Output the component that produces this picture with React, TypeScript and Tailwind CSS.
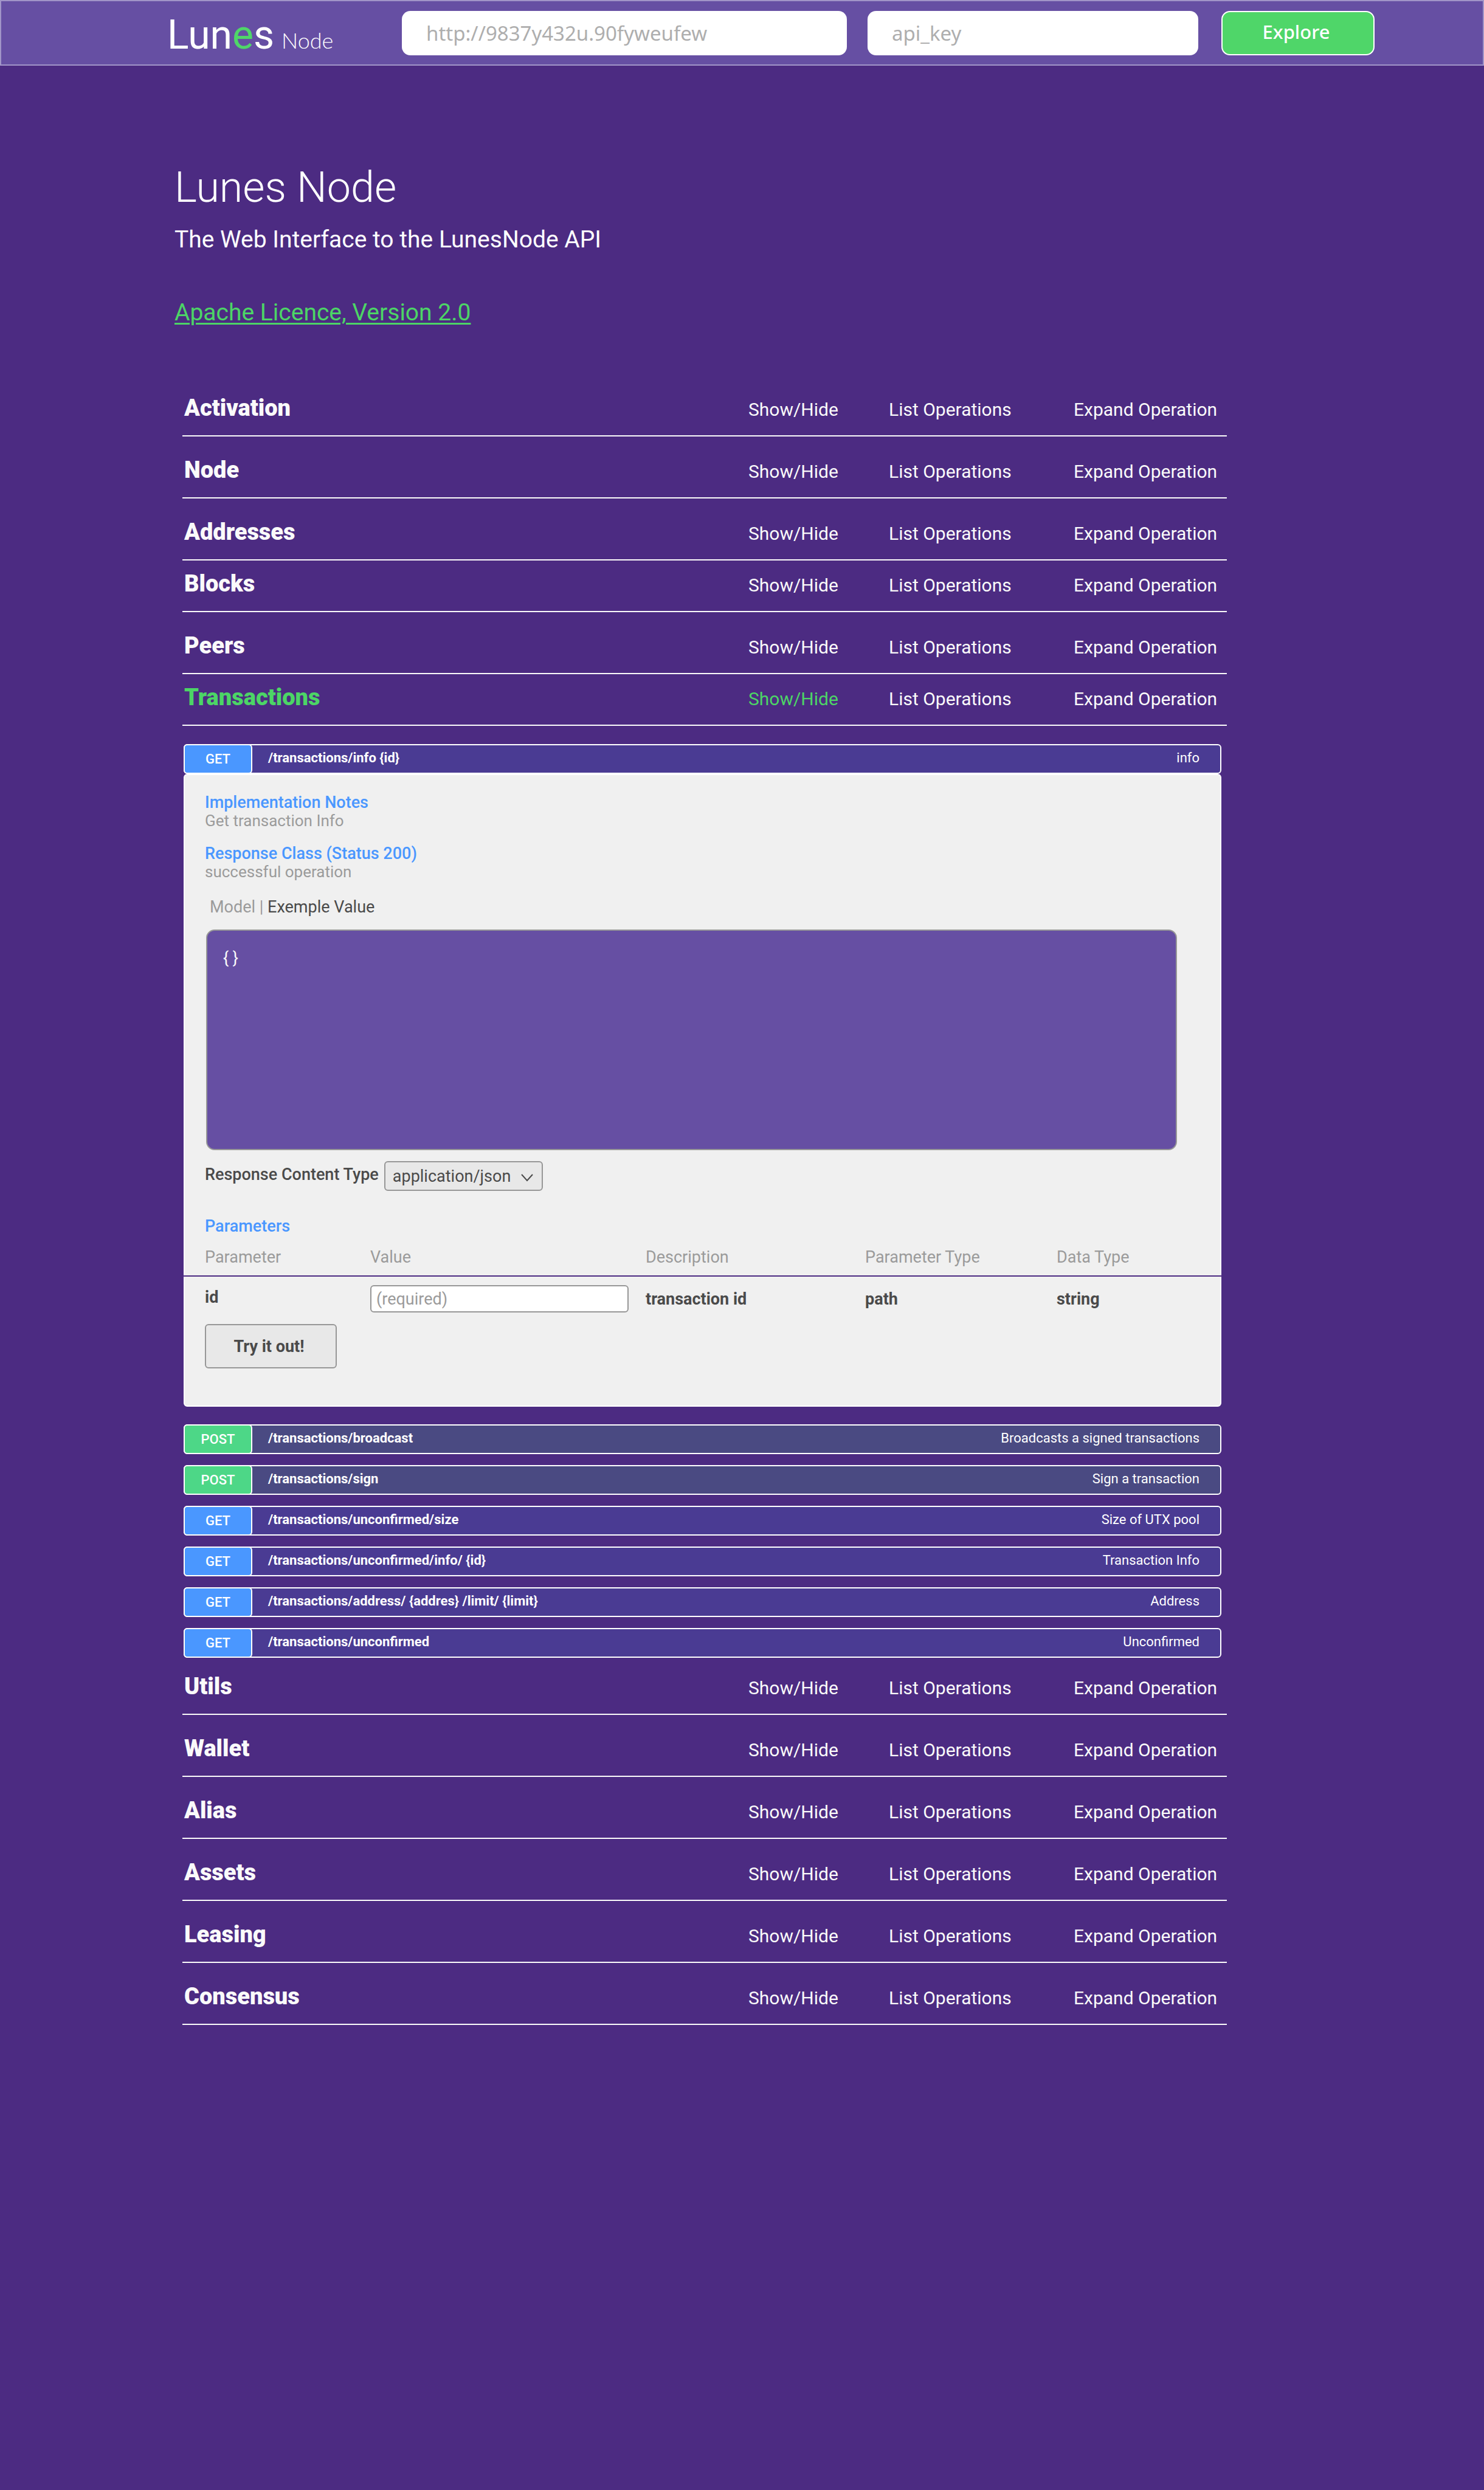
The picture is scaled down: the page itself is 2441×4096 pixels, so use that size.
import React from "react";

type Method = "GET" | "POST";

type Endpoint = { method: Method; path: string; summary: string };

const sectionsBefore = [
  { name: "Activation", compact: false },
  { name: "Node", compact: false },
  { name: "Addresses", compact: false },
  { name: "Blocks", compact: true },
  { name: "Peers", compact: false },
  { name: "Transactions", compact: true, active: true },
];

const sectionsAfter = [
  { name: "Utils", compact: true },
  { name: "Wallet", compact: false },
  { name: "Alias", compact: false },
  { name: "Assets", compact: false },
  { name: "Leasing", compact: false },
  { name: "Consensus", compact: false },
];

const endpoints: Endpoint[] = [
  { method: "POST", path: "/transactions/broadcast", summary: "Broadcasts a signed transactions" },
  { method: "POST", path: "/transactions/sign", summary: "Sign a transaction" },
  { method: "GET", path: "/transactions/unconfirmed/size", summary: "Size of UTX pool" },
  { method: "GET", path: "/transactions/unconfirmed/info/ {id}", summary: "Transaction Info" },
  { method: "GET", path: "/transactions/address/ {addres} /limit/ {limit}", summary: "Address" },
  { method: "GET", path: "/transactions/unconfirmed", summary: "Unconfirmed" },
];

function Header() {
  return (
    <header className="flex h-[108px] items-center border-2 border-[#a195c8] bg-[#664fa3] pr-[178px] pl-[273px] font-['Noto_Sans',sans-serif]">
      <div className="flex w-[386px] shrink-0 items-baseline gap-3 pt-2 text-white">
        <span className="font-['Roboto',sans-serif] text-[66px] leading-[72px]">
          Lun<span className="text-[#4fd669]">e</span>s
        </span>
        <span className="font-['Lato',sans-serif] text-[36px] font-light">Node</span>
      </div>
      <input
        type="text"
        aria-label="API address"
        placeholder="http://9837y432u.90fyweufew"
        className="h-[73px] min-w-0 flex-[652] rounded-[14px] bg-white px-[40px] text-[33px] text-[#4a4a4a] placeholder:text-[#aeaeae]"
      />
      <input
        type="text"
        aria-label="API key"
        placeholder="api_key"
        className="ml-[34px] h-[73px] min-w-0 flex-[464] rounded-[14px] bg-white px-[40px] text-[33px] text-[#4a4a4a] placeholder:text-[#aeaeae]"
      />
      <button
        type="button"
        className="ml-[38px] h-[73px] w-[252px] shrink-0 rounded-[14px] border-2 border-white bg-[#4fd669] pr-1.5 pb-1 text-[31px] font-medium text-white"
      >
        Explore
      </button>
    </header>
  );
}

function Section({ name, compact, active }: { name: string; compact: boolean; active?: boolean }) {
  return (
    <div
      className={`flex items-baseline border-b-2 border-[#fafafa] pr-[10px] pb-[18px] pl-[3px] text-[30px] leading-[48px] text-[#fafafa] ${compact ? "pt-[14px]" : "pt-[31px]"}`}
    >
      <h2 className={`flex-1 text-[38px] font-black ${active ? "text-[#4cd566]" : ""}`}>{name}</h2>
      <button type="button" className={`w-[231px] text-left ${active ? "text-[#4cd566]" : ""}`}>
        Show/Hide
      </button>
      <button type="button" className="w-[304px] text-left">
        List Operations
      </button>
      <button type="button" className="w-[242px] text-left whitespace-nowrap">
        Expand Operation
      </button>
    </div>
  );
}

function EndpointRow({ method, path, summary }: Endpoint) {
  const post = method === "POST";
  return (
    <div
      className={`flex h-[49px] items-center rounded-md border-2 border-white text-[22px] leading-[26px] text-white ${post ? "bg-[#4a4a82]" : "bg-[#4a3b93]"}`}
    >
      <span
        className={`-my-0.5 -ml-0.5 flex h-[49px] w-[113px] items-center justify-center rounded-md border-2 border-white font-medium ${post ? "bg-[#4dd787]" : "bg-[#4a97ff]"}`}
      >
        {method}
      </span>
      <a href="#" className="ml-[26px] flex-1 pb-1 font-bold">
        {path}
      </a>
      <span className="mr-[34px] pb-1">{summary}</span>
    </div>
  );
}

function HeadCell({ width, children }: { width: string; children: React.ReactNode }) {
  return (
    <th className={`border-b-2 border-[#4c2b82] pt-[21px] pb-[15px] font-normal first:pl-[35px] ${width}`}>
      {children}
    </th>
  );
}

function OperationPanel() {
  return (
    <div className="rounded-md border-2 border-white bg-[#f0f0f0] pt-[30px] pb-[61px] text-[27px] leading-[30px] text-[#9b9b9b]">
      <div className="pr-[71px] pl-[33px]">
        <h3 className="font-medium text-[#4a97ff]">Implementation Notes</h3>
        <p className="text-[26px]">Get transaction Info</p>
        <h3 className="mt-6 font-medium text-[#4a97ff]">Response Class (Status 200)</h3>
        <p className="text-[26px]">successful operation</p>
        <p className="mt-7 pl-2">
          Model | <span className="text-[#4a4a4a]">Exemple Value</span>
        </p>
        <pre className="mt-[22px] ml-0.5 h-[363px] rounded-[14px] border-2 border-[#979797] bg-[#664fa3] px-[26px] py-[30px] font-['Roboto',sans-serif] text-[#fafafa]">
          {"{ }"}
        </pre>
        <div className="mt-[18px] flex items-center gap-[9px] text-[#4a4a4a]">
          <label htmlFor="content-type" className="pb-1.5 font-medium">
            Response Content Type
          </label>
          <div className="relative">
            <select
              id="content-type"
              className="h-[49px] w-[261px] appearance-none rounded-md border-2 border-[#979797] bg-[#e8e8e8] pl-3"
            >
              <option>application/json</option>
            </select>
            <svg
              viewBox="0 0 20 13"
              className="pointer-events-none absolute top-[21px] right-4 h-[13px] w-5"
              fill="none"
              stroke="#4a4a4a"
              strokeWidth="2"
            >
              <path d="M1 1 L10 11 L19 1" />
            </svg>
          </div>
        </div>
        <h3 className="mt-[43px] font-medium text-[#4a97ff]">Parameters</h3>
      </div>
      <div className="-mx-0.5">
        <table className="w-full table-fixed border-separate border-spacing-0 text-left">
          <thead>
            <tr>
              <HeadCell width="w-[307px]">Parameter</HeadCell>
              <HeadCell width="w-[453px]">Value</HeadCell>
              <HeadCell width="w-[361px]">Description</HeadCell>
              <HeadCell width="w-[315px]">Parameter Type</HeadCell>
              <HeadCell width="w-auto">Data Type</HeadCell>
            </tr>
          </thead>
          <tbody className="font-bold text-[#4a4a4a]">
            <tr>
              <td className="pt-[14px] pb-1.5 pl-[35px]">
                <label htmlFor="param-id">id</label>
              </td>
              <td className="pt-[14px]">
                <input
                  id="param-id"
                  type="text"
                  placeholder="(required)"
                  className="block h-[45px] w-[425px] rounded-md border-2 border-[#979797] bg-white px-2 font-normal placeholder:text-[#9b9b9b]"
                />
              </td>
              <td className="pt-[14px]">transaction id</td>
              <td className="pt-[14px]">path</td>
              <td className="pt-[14px]">string</td>
            </tr>
          </tbody>
        </table>
      </div>
      <button
        type="button"
        className="mt-[19px] ml-[33px] block h-[73px] w-[217px] rounded-md border-2 border-[#979797] bg-[#e8e8e8] pr-1.5 font-bold text-[#4a4a4a]"
      >
        Try it out!
      </button>
    </div>
  );
}

export default function App() {
  return (
    <div className="min-h-screen bg-[#4c2b82] font-['Roboto',sans-serif]">
      <Header />
      <main className="pb-20">
        <div className="pt-[162px] pl-[287px] text-white">
          <h1 className="text-[70px] leading-[76px] font-light">Lunes Node</h1>
          <p className="mt-6 text-[39px] leading-[48px]">The Web Interface to the LunesNode API</p>
          <a
            href="#"
            className="mt-[72px] inline-block text-[39px] leading-[48px] text-[#4cd566] underline decoration-[3px] underline-offset-[4px]"
          >
            Apache Licence, Version 2.0
          </a>
        </div>
        <div className="mt-[78px] mr-[423px] ml-[300px]">
          {sectionsBefore.map((section) => (
            <Section key={section.name} {...section} />
          ))}
          <div className="mt-[30px] mr-[9px] mb-[9px] ml-[2px]">
            <EndpointRow method="GET" path="/transactions/info {id}" summary="info" />
            <OperationPanel />
            <div className="mt-[29px] flex flex-col gap-[18px]">
              {endpoints.map((endpoint) => (
                <EndpointRow key={endpoint.path} {...endpoint} />
              ))}
            </div>
          </div>
          {sectionsAfter.map((section) => (
            <Section key={section.name} {...section} />
          ))}
        </div>
      </main>
    </div>
  );
}
